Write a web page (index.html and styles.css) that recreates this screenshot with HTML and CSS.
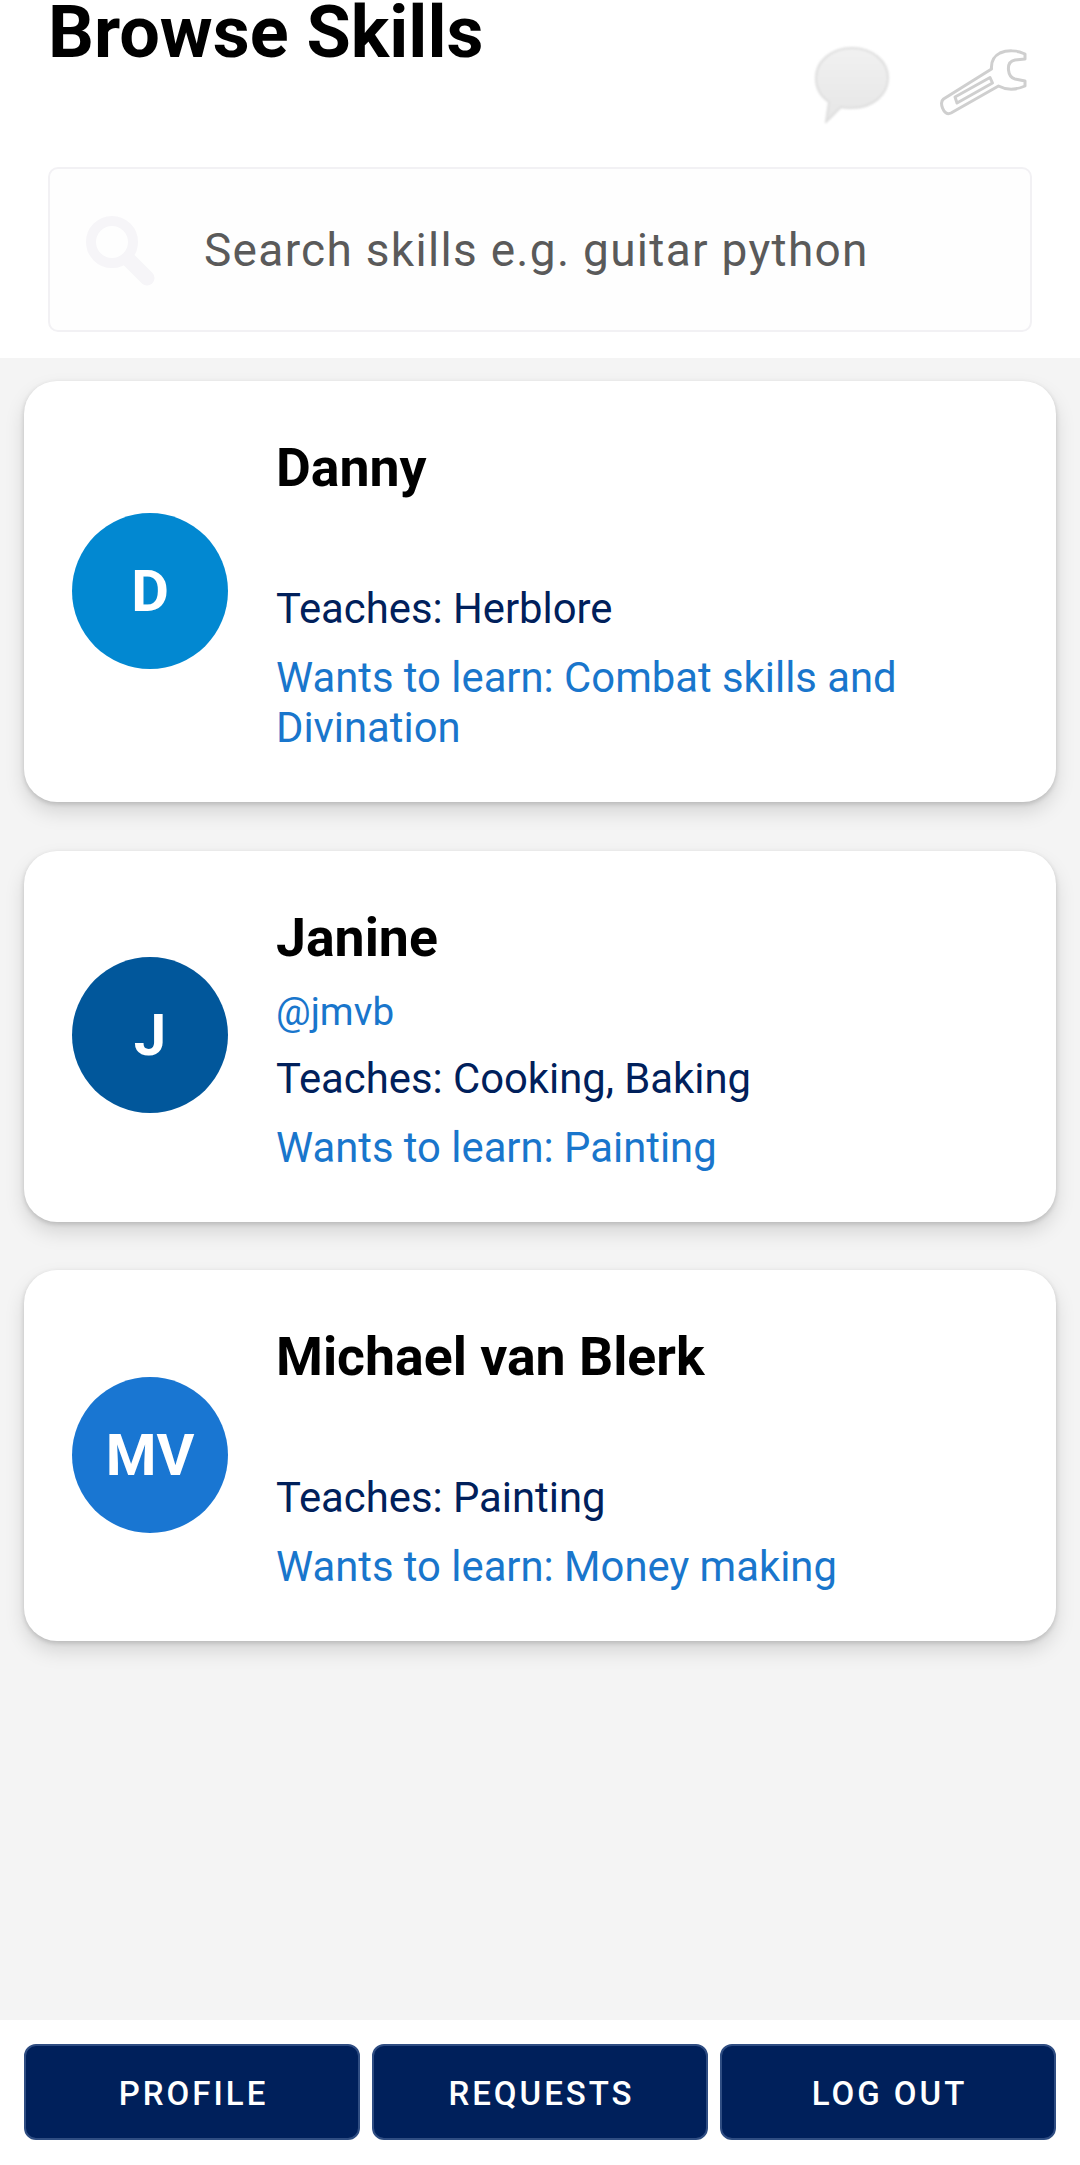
FILE: index.html
```html
<!DOCTYPE html>
<html lang="en">
<head>
    <meta charset="UTF-8">
    <meta name="viewport" content="width=device-width, initial-scale=1.0">
    <title>Browse Skills</title>
    <link rel="stylesheet" href="styles.css">
</head>
<body>

    <div class="header">
        <div class="title-row">
            <h1>Browse Skills</h1>
            <div class="header-icons">
                <svg class="icon-bubble" viewBox="0 0 76 76" width="76" height="76">
                    <defs>
                        <linearGradient id="bubbleFill" x1="0" y1="0" x2="0" y2="1">
                            <stop offset="0" stop-color="#f1f1f1"/>
                            <stop offset="1" stop-color="#e6e6e6"/>
                        </linearGradient>
                    </defs>
                    <path d="M38 1C58 1 74 14 74 31C74 48 58 61 38 61C33 61 30 61 27 60L12 75L15 55C6 49 2 40 2 31C2 14 18 1 38 1Z" fill="url(#bubbleFill)" stroke="#dedede" stroke-width="2"/>
                </svg>
                <svg class="icon-wrench" viewBox="0 0 90 68" width="90" height="68">
                    <path d="M3.5 50L51.5 20C51 13 54 7 60 4C67 1 77 1 85 5V10L75 11C70 12 68 16 68.5 21C69 26 71 29 75 30L85 32V37C76 41 66 41 58.5 37L11 64C7 66 4 63 2.5 59C1 55 1 52 3.5 50Z" fill="#fff" stroke="#cfcfcf" stroke-width="3" stroke-linejoin="round"/>
                    <path d="M15 48L50 28.5L52.5 34L17 54Z" fill="#fff" stroke="#cfcfcf" stroke-width="3" stroke-linejoin="round"/>
                </svg>
            </div>
        </div>
        <div class="search-box">
            <svg class="icon-search" viewBox="0 0 72 72" width="72" height="72">
                <circle cx="27" cy="26" r="21" fill="none" stroke="#f6f5f8" stroke-width="10"/>
                <line x1="44" y1="44" x2="62" y2="62" stroke="#f6f5f8" stroke-width="15" stroke-linecap="round"/>
            </svg>
            <span class="search-text">Search skills e.g. guitar python</span>
        </div>
    </div>

    <div class="list">
        <div class="card">
            <div class="avatar avatar-d">D</div>
            <div class="info">
                <div class="name">Danny</div>
                <div class="handle">&nbsp;</div>
                <div class="teaches">Teaches: Herblore</div>
                <div class="wants">Wants to learn: Combat skills and Divination</div>
            </div>
        </div>
        <div class="card">
            <div class="avatar avatar-j">J</div>
            <div class="info">
                <div class="name">Janine</div>
                <div class="handle">@jmvb</div>
                <div class="teaches">Teaches: Cooking, Baking</div>
                <div class="wants">Wants to learn: Painting</div>
            </div>
        </div>
        <div class="card">
            <div class="avatar avatar-mv">MV</div>
            <div class="info">
                <div class="name">Michael van Blerk</div>
                <div class="handle">&nbsp;</div>
                <div class="teaches">Teaches: Painting</div>
                <div class="wants">Wants to learn: Money making</div>
            </div>
        </div>
    </div>

    <div class="footer">
        <button class="nav-btn">PROFILE</button>
        <button class="nav-btn">REQUESTS</button>
        <button class="nav-btn">LOG OUT</button>
    </div>

</body>
</html>
```

FILE: styles.css
```css
body {
    font-family: Roboto, Arial, sans-serif;
    margin: 0;
    padding: 0;
    height: 100vh;
    display: flex;
    flex-direction: column;
    background-color: #f4f4f4;
    overflow: hidden;
}
.header {
    background: #fff;
    padding: 0 48px 26px;
}
.title-row {
    height: 167px;
    display: flex;
    justify-content: space-between;
    align-items: flex-start;
}
h1 {
    margin: 0;
    font-size: 72px;
    line-height: 65px;
    font-weight: 700;
    color: #000;
}
.header-icons {
    display: flex;
    align-items: flex-start;
    gap: 50px;
    padding-top: 47px;
    margin-right: 2px;
}
.icon-bubble { filter: blur(0.8px); }
.icon-wrench { margin-top: 2px; filter: blur(0.5px); }
.search-box {
    height: 165px;
    box-sizing: border-box;
    border: 2px solid #f2f1f4;
    border-radius: 10px;
    background: #fefefe;
    display: flex;
    align-items: center;
    padding-left: 35px;
}
.icon-search { margin-top: 4px; filter: blur(0.6px); }
.search-text {
    margin-left: 47px;
    font-size: 46px;
    letter-spacing: 1.3px;
    color: #5a5a5a;
}
.list {
    flex: 1;
    padding: 23px 24px 0;
    display: flex;
    flex-direction: column;
    gap: 48.5px;
}
.card {
    background: #fff;
    border-radius: 33px;
    box-shadow: 0 10px 20px rgba(0, 0, 0, 0.13), 0 2px 5px rgba(0, 0, 0, 0.16);
    padding: 57px 48px 49px;
    display: flex;
    align-items: center;
}
.avatar {
    width: 156px;
    height: 156px;
    flex-shrink: 0;
    border-radius: 50%;
    color: #fff;
    font-size: 58px;
    font-weight: 700;
    display: flex;
    justify-content: center;
    align-items: center;
    margin-right: 48px;
    margin-bottom: 10px;
}
.avatar-d { background: #0288d1; }
.avatar-j { background: #01579b; }
.avatar-mv { background: #1976d2; }
.info { flex: 1; }
.name {
    font-size: 53.6px;
    line-height: 60px;
    font-weight: 700;
    color: #000;
}
.handle {
    font-size: 38.6px;
    line-height: 50px;
    margin-top: 19px;
    color: #1976cc;
}
.teaches {
    font-size: 41.8px;
    line-height: 50px;
    margin-top: 17px;
    color: #00205b;
}
.wants {
    font-size: 41.8px;
    line-height: 50px;
    margin-top: 19px;
    color: #1976cc;
}
.footer {
    background: #fff;
    height: 145px;
    box-sizing: border-box;
    padding: 24px 24px 25px;
    display: flex;
    gap: 12px;
}
.nav-btn {
    flex: 1;
    border: 2px solid #2f4d82;
    border-radius: 12px;
    background: #00205b;
    color: #fff;
    font-family: Roboto, Arial, sans-serif;
    font-size: 33px;
    font-weight: 500;
    letter-spacing: 3px;
    padding: 2px 0 0 3px;
}
```
